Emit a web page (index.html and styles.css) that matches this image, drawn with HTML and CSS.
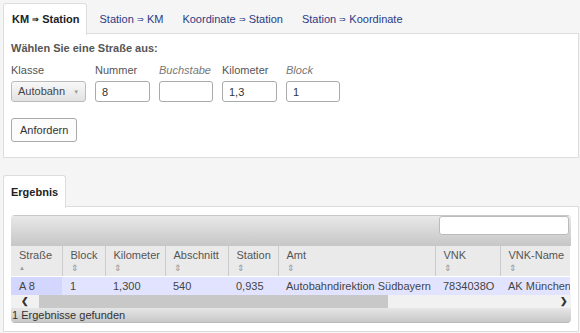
FILE: index.html
```html
<!DOCTYPE html>
<html lang="de">
<head>
    <meta charset="UTF-8">
    <title>Stationierung</title>
    <link rel="stylesheet" href="styles.css">
</head>
<body>
    <ul class="tabs">
        <li class="tab active">KM <span class="arr">&#8658;</span> Station</li>
        <li class="tab">Station <span class="arr">&#8658;</span> KM</li>
        <li class="tab">Koordinate <span class="arr">&#8658;</span> Station</li>
        <li class="tab">Station <span class="arr">&#8658;</span> Koordinate</li>
    </ul>
    <div class="panel form-panel">
        <div class="legend">Wählen Sie eine Straße aus:</div>
        <div class="fields">
            <div class="field w-klasse">
                <label>Klasse</label>
                <div class="select">Autobahn <span class="caret">&#9660;</span></div>
            </div>
            <div class="field w-num">
                <label>Nummer</label>
                <input type="text" value="8">
            </div>
            <div class="field w-buch">
                <label class="opt">Buchstabe</label>
                <input type="text" value="">
            </div>
            <div class="field w-num">
                <label>Kilometer</label>
                <input type="text" value="1,3">
            </div>
            <div class="field w-buch">
                <label class="opt">Block</label>
                <input type="text" value="1">
            </div>
        </div>
        <button class="btn">Anfordern</button>
    </div>

    <ul class="tabs tabs-result">
        <li class="tab active">Ergebnis</li>
    </ul>
    <div class="panel result-panel">
        <div class="dt">
            <div class="dt-toolbar">
                <input class="dt-search" type="text">
            </div>
            <div class="dt-scroll">
                <table>
                    <colgroup>
                        <col style="width:51px"><col style="width:43px"><col style="width:60px"><col style="width:63px">
                        <col style="width:50px"><col style="width:157px"><col style="width:65px"><col style="width:70px">
                    </colgroup>
                    <thead>
                        <tr>
                            <th>Straße<span class="sort up">&#9650;</span></th>
                            <th>Block<span class="sort">&#8661;</span></th>
                            <th>Kilometer<span class="sort">&#8661;</span></th>
                            <th>Abschnitt<span class="sort">&#8661;</span></th>
                            <th>Station<span class="sort">&#8661;</span></th>
                            <th>Amt<span class="sort">&#8661;</span></th>
                            <th>VNK<span class="sort">&#8661;</span></th>
                            <th>VNK-Name<span class="sort">&#8661;</span></th>
                        </tr>
                    </thead>
                    <tbody>
                        <tr>
                            <td class="sorted">A 8</td>
                            <td>1</td>
                            <td>1,300</td>
                            <td>540</td>
                            <td>0,935</td>
                            <td>Autobahndirektion Südbayern</td>
                            <td>7834038O</td>
                            <td>AK München</td>
                        </tr>
                    </tbody>
                </table>
            </div>
            <div class="scrollbar">
                <span class="sb-arrow">&#10094;</span>
                <span class="sb-thumb"></span>
                <span class="sb-rest"></span>
                <span class="sb-arrow">&#10095;</span>
            </div>
            <div class="dt-footer">1 Ergebnisse gefunden</div>
        </div>
    </div>
</body>
</html>
```

FILE: styles.css
```css
body {
    margin: 0;
    padding: 0 1px 0 3px;
    background-color: #f5f5f5;
    font-family: "Liberation Sans", Arial, sans-serif;
    font-size: 11px;
    color: #555;
}
.tabs {
    list-style: none;
    margin: 0;
    padding: 3px 0 0 0;
    display: flex;
    border-bottom: 1px solid #ddd;
    height: 30px;
}
.tab {
    padding: 0 8px;
    margin-right: 1px;
    line-height: 30px;
    color: #2c3a84;
    font-size: 11px;
    border: 1px solid transparent;
    border-bottom: none;
    border-radius: 3px 3px 0 0;
}
.tab.active {
    background: white;
    border-color: #ddd;
    color: #222;
    font-weight: bold;
    height: 31px;
    padding-right: 6px;
    margin-right: 4px;
}
.arr {
    font-size: 8px;
    vertical-align: 1px;
}
.panel {
    background: white;
    border: 1px solid #ddd;
    border-top: none;
}
.form-panel {
    padding: 8px 7px 15px;
}
.legend {
    font-weight: bold;
    color: #555;
    font-size: 11px;
    margin-bottom: 10px;
}
.fields {
    display: flex;
    gap: 9px;
}
.field {
    display: flex;
    flex-direction: column;
}
.field label {
    color: #555;
    line-height: 13px;
    margin-bottom: 4px;
}
.field label.opt {
    font-style: italic;
    color: #777;
}
.w-klasse { width: 75px; }
.w-num { width: 55px; }
.w-buch { width: 54px; }
.field input {
    box-sizing: border-box;
    width: 100%;
    height: 21px;
    border: 1px solid #aaa;
    border-radius: 3px;
    padding: 0 6px;
    font-family: inherit;
    font-size: 11px;
    color: #333;
}
.select {
    box-sizing: border-box;
    height: 21px;
    line-height: 19px;
    border: 1px solid #bbb;
    border-radius: 3px;
    background: linear-gradient(#f8f8f8, #e2e2e2);
    padding-left: 6px;
    color: #444;
}
.caret {
    font-size: 6px;
    color: #999;
    margin-left: 5px;
    vertical-align: 1px;
}
.btn {
    margin-top: 16px;
    height: 24px;
    padding: 0 8px;
    border: 1px solid #aaa;
    border-radius: 3px;
    background: #fcfcfc;
    font-family: inherit;
    font-size: 11px;
    color: #333;
}
.tabs-result {
    margin-top: 14px;
    height: 31px;
}
.tabs-result .tab.active {
    padding: 0 7px;
    height: 32px;
    line-height: 32px;
}
.result-panel {
    padding: 8px 7px 8px;
}
.dt {
    border-radius: 4px;
    overflow: hidden;
}
.dt-toolbar {
    height: 30px;
    background: linear-gradient(#e8e8e8, #c6c6c6);
    display: flex;
    justify-content: flex-end;
    align-items: flex-start;
    padding-right: 2px;
    border-top: 1px solid #c9c9c9;
}
.dt-search {
    width: 130px;
    height: 19px;
    box-sizing: border-box;
    border: 1px solid #bbb;
    border-radius: 3px;
    margin-top: 0;
}
.dt-scroll {
    overflow: hidden;
}
table {
    border-collapse: collapse;
    table-layout: fixed;
    width: 559px;
}
th {
    background: #eaeaea;
    font-weight: normal;
    text-align: left;
    color: #555;
    padding: 3px 8px 2px 8px;
    border-right: 1px solid #ccc;
    border-bottom: 1px solid #fff;
    line-height: 13px;
    white-space: nowrap;
    overflow: hidden;
}
th:last-child {
    border-right: none;
}
.sort {
    display: block;
    font-size: 9px;
    line-height: 12px;
    color: #999;
}
.sort.up {
    font-size: 6px;
}
td {
    background: #e2e4ff;
    color: #444;
    padding: 0 8px;
    height: 18px;
    white-space: nowrap;
    overflow: hidden;
}
td.sorted {
    background: #d3d6ff;
}
.scrollbar {
    display: flex;
    height: 13px;
    background: #f1f1f1;
    align-items: stretch;
}
.sb-arrow {
    width: 14px;
    font-size: 9px;
    line-height: 13px;
    text-align: center;
    color: #333;
    font-weight: bold;
}
.sb-arrow:first-child {
    width: 28px;
}
.sb-thumb {
    width: 349px;
    background: #c8c8c8;
}
.sb-rest {
    flex: 1;
}
.dt-footer {
    height: 14px;
    line-height: 14px;
    background: linear-gradient(#e6e6e6, #c8c8c8);
    color: #333;
    padding-left: 1px;
    border-bottom: 1px solid #bbb;
}
```
